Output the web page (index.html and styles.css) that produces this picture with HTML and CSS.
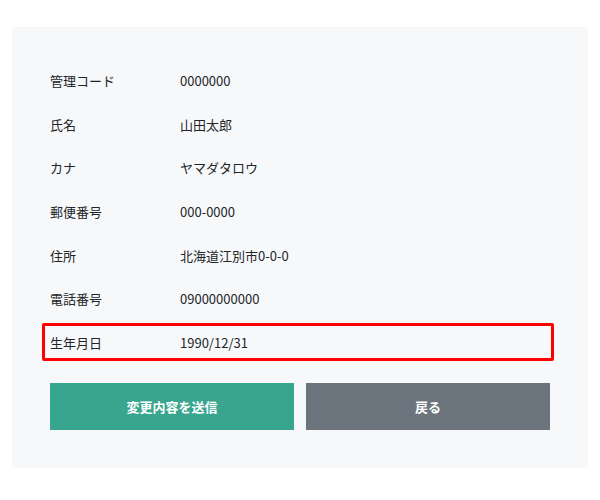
FILE: index.html
```html
<!DOCTYPE html>
<html lang="ja">
<head>
<meta charset="utf-8">
<link rel="stylesheet" href="styles.css">
</head>
<body>
<div class="panel">
  <dl class="list">
    <div class="row"><dt>管理コード</dt><dd>0000000</dd></div>
    <div class="row"><dt>氏名</dt><dd>山田太郎</dd></div>
    <div class="row"><dt>カナ</dt><dd>ヤマダタロウ</dd></div>
    <div class="row"><dt>郵便番号</dt><dd>000-0000</dd></div>
    <div class="row"><dt>住所</dt><dd>北海道江別市0-0-0</dd></div>
    <div class="row"><dt>電話番号</dt><dd>09000000000</dd></div>
    <div class="row highlight"><dt>生年月日</dt><dd>1990/12/31</dd></div>
  </dl>
  <div class="actions">
    <button class="btn btn-primary">変更内容を送信</button>
    <button class="btn btn-secondary">戻る</button>
  </div>
</div>
</body>
</html>
```
FILE: styles.css
```css
html, body {
  margin: 0;
  padding: 0;
  background: #ffffff;
}
body {
  font-family: "Noto Sans CJK JP", "Noto Sans", sans-serif;
  font-size: 13px;
  color: #212529;
  padding: 27px 12px 0;
}
.panel {
  background: #f7f8fa;
  padding: 32px 38px 38px;
}
.list {
  margin: 0;
}
.row {
  display: flex;
  padding: 12px 0;
  line-height: 19.67px;
  position: relative;
}
.row dt {
  width: 130px;
  flex: none;
  margin: 0;
}
.row dd {
  margin: 0;
}
.highlight::after {
  content: "";
  position: absolute;
  top: 2px;
  bottom: 4px;
  left: -8px;
  right: -4px;
  border: 3px solid #ff0000;
  border-radius: 2px;
}
.actions {
  display: flex;
  gap: 12px;
  margin-top: 18px;
}
.btn {
  flex: 1;
  height: 47px;
  border: none;
  border-radius: 0;
  font-family: "Noto Sans CJK JP", "Noto Sans", sans-serif;
  font-size: 13px;
  font-weight: bold;
  color: #ffffff;
  cursor: pointer;
}
.btn-primary {
  background: #38a58e;
}
.btn-secondary {
  background: #6c757d;
}
```
